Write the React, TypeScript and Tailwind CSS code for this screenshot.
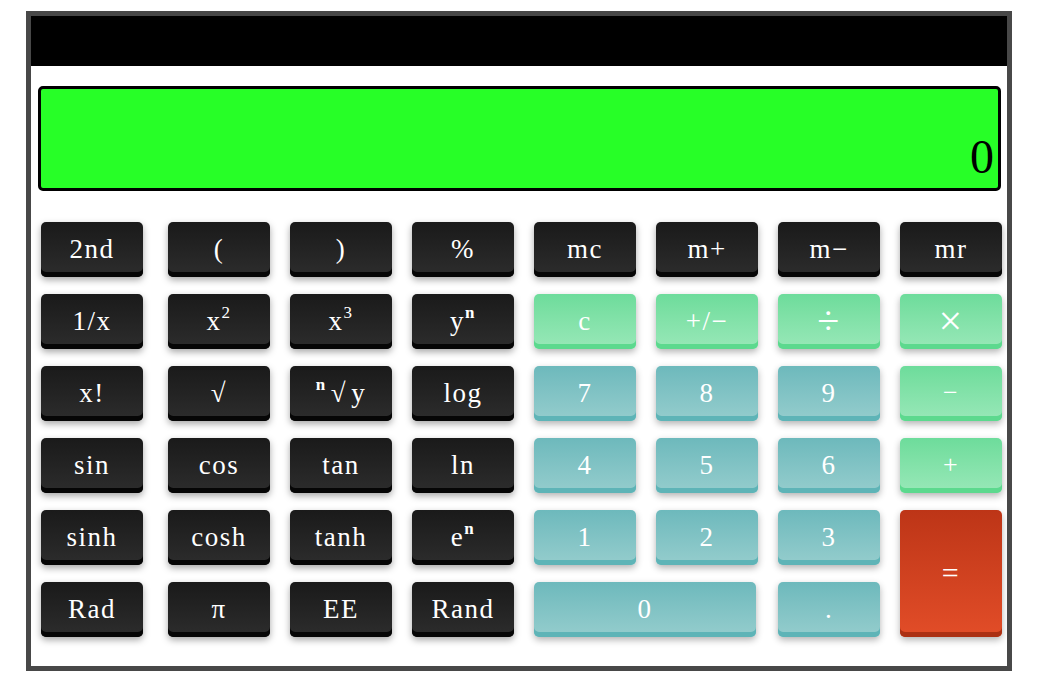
import React from 'react';

type Kind = 'dark' | 'green' | 'teal' | 'red';

const styles: Record<Kind, string> = {
    dark: 'bg-gradient-to-b from-[#1a1a1a] to-[#2d2d2d] shadow-[inset_0_-5px_0_#060606,0_3px_7px_rgba(0,0,0,0.35)]',
    green: 'bg-gradient-to-b from-[#6ddc9b] to-[#98e8b8] shadow-[inset_0_-5px_0_#5cd98e,0_3px_7px_rgba(0,0,0,0.3)]',
    teal: 'bg-gradient-to-b from-[#6db9bc] to-[#95cdcd] shadow-[inset_0_-5px_0_#5eb4b7,0_3px_7px_rgba(0,0,0,0.3)]',
    red: 'bg-gradient-to-b from-[#bd3517] to-[#e24d28] shadow-[inset_0_-5px_0_#ab3013,0_3px_7px_rgba(0,0,0,0.3)]',
};

const Key = ({ kind, children, className = '' }: { kind: Kind; children: React.ReactNode; className?: string }) => (
    <button
        className={`w-[102px] h-[55px] rounded-[5px] pb-[1px] flex items-center justify-center text-white text-[27px] tracking-[1.5px] leading-none ${styles[kind]} ${className}`}
    >
        {children}
    </button>
);

const Sup = ({ children, bold = false }: { children: React.ReactNode; bold?: boolean }) => (
    <span className={`text-[17px] relative -top-[9px] ${bold ? 'font-bold' : ''}`}>{children}</span>
);

const App = () => {
    return (
        <div className="min-h-screen bg-white pt-[11px] pl-[26px]" style={{ fontFamily: '"Liberation Serif", serif' }}>
            <div className="w-[986px] h-[660px] border-[5px] border-[#484848] bg-white">
                {/* top bar */}
                <div className="h-[50px] bg-black"></div>

                {/* display */}
                <div className="mt-[20px] ml-[7px] w-[963px] h-[105px] border-[3px] border-black rounded-[5px] bg-[#27ff27] flex items-end justify-end pr-[4px] pb-[7px]">
                    <span className="text-[48px] leading-none text-black">0</span>
                </div>

                {/* keys */}
                <div className="mt-[31px] ml-[10px] grid grid-cols-[107px_repeat(7,102px)] grid-rows-[repeat(6,55px)] gap-x-5 gap-y-[17px]">
                    <Key kind="dark">2nd</Key>
                    <Key kind="dark">(</Key>
                    <Key kind="dark">)</Key>
                    <Key kind="dark">%</Key>
                    <Key kind="dark">mc</Key>
                    <Key kind="dark">m+</Key>
                    <Key kind="dark">m−</Key>
                    <Key kind="dark">mr</Key>

                    <Key kind="dark">1/x</Key>
                    <Key kind="dark">x<Sup>2</Sup></Key>
                    <Key kind="dark">x<Sup>3</Sup></Key>
                    <Key kind="dark">y<Sup bold>n</Sup></Key>
                    <Key kind="green">c</Key>
                    <Key kind="green">+/−</Key>
                    <Key kind="green"><span className="text-[40px]">÷</span></Key>
                    <Key kind="green"><span className="text-[42px] font-light">×</span></Key>

                    <Key kind="dark">x!</Key>
                    <Key kind="dark">√</Key>
                    <Key kind="dark"><Sup bold>n</Sup><span className="mx-[4px]">√</span>y</Key>
                    <Key kind="dark">log</Key>
                    <Key kind="teal">7</Key>
                    <Key kind="teal">8</Key>
                    <Key kind="teal">9</Key>
                    <Key kind="green"><span className="text-[26px]">−</span></Key>

                    <Key kind="dark">sin</Key>
                    <Key kind="dark">cos</Key>
                    <Key kind="dark">tan</Key>
                    <Key kind="dark">ln</Key>
                    <Key kind="teal">4</Key>
                    <Key kind="teal">5</Key>
                    <Key kind="teal">6</Key>
                    <Key kind="green"><span className="text-[26px]">+</span></Key>

                    <Key kind="dark">sinh</Key>
                    <Key kind="dark">cosh</Key>
                    <Key kind="dark">tanh</Key>
                    <Key kind="dark">e<Sup bold>n</Sup></Key>
                    <Key kind="teal">1</Key>
                    <Key kind="teal">2</Key>
                    <Key kind="teal">3</Key>
                    <Key kind="red" className="row-span-2 h-[127px]"><span className="text-[30px]">=</span></Key>

                    <Key kind="dark">Rad</Key>
                    <Key kind="dark">π</Key>
                    <Key kind="dark">EE</Key>
                    <Key kind="dark">Rand</Key>
                    <Key kind="teal" className="col-span-2 w-[222px]">0</Key>
                    <Key kind="teal">.</Key>
                </div>
            </div>
        </div>
    );
};

export default App;
